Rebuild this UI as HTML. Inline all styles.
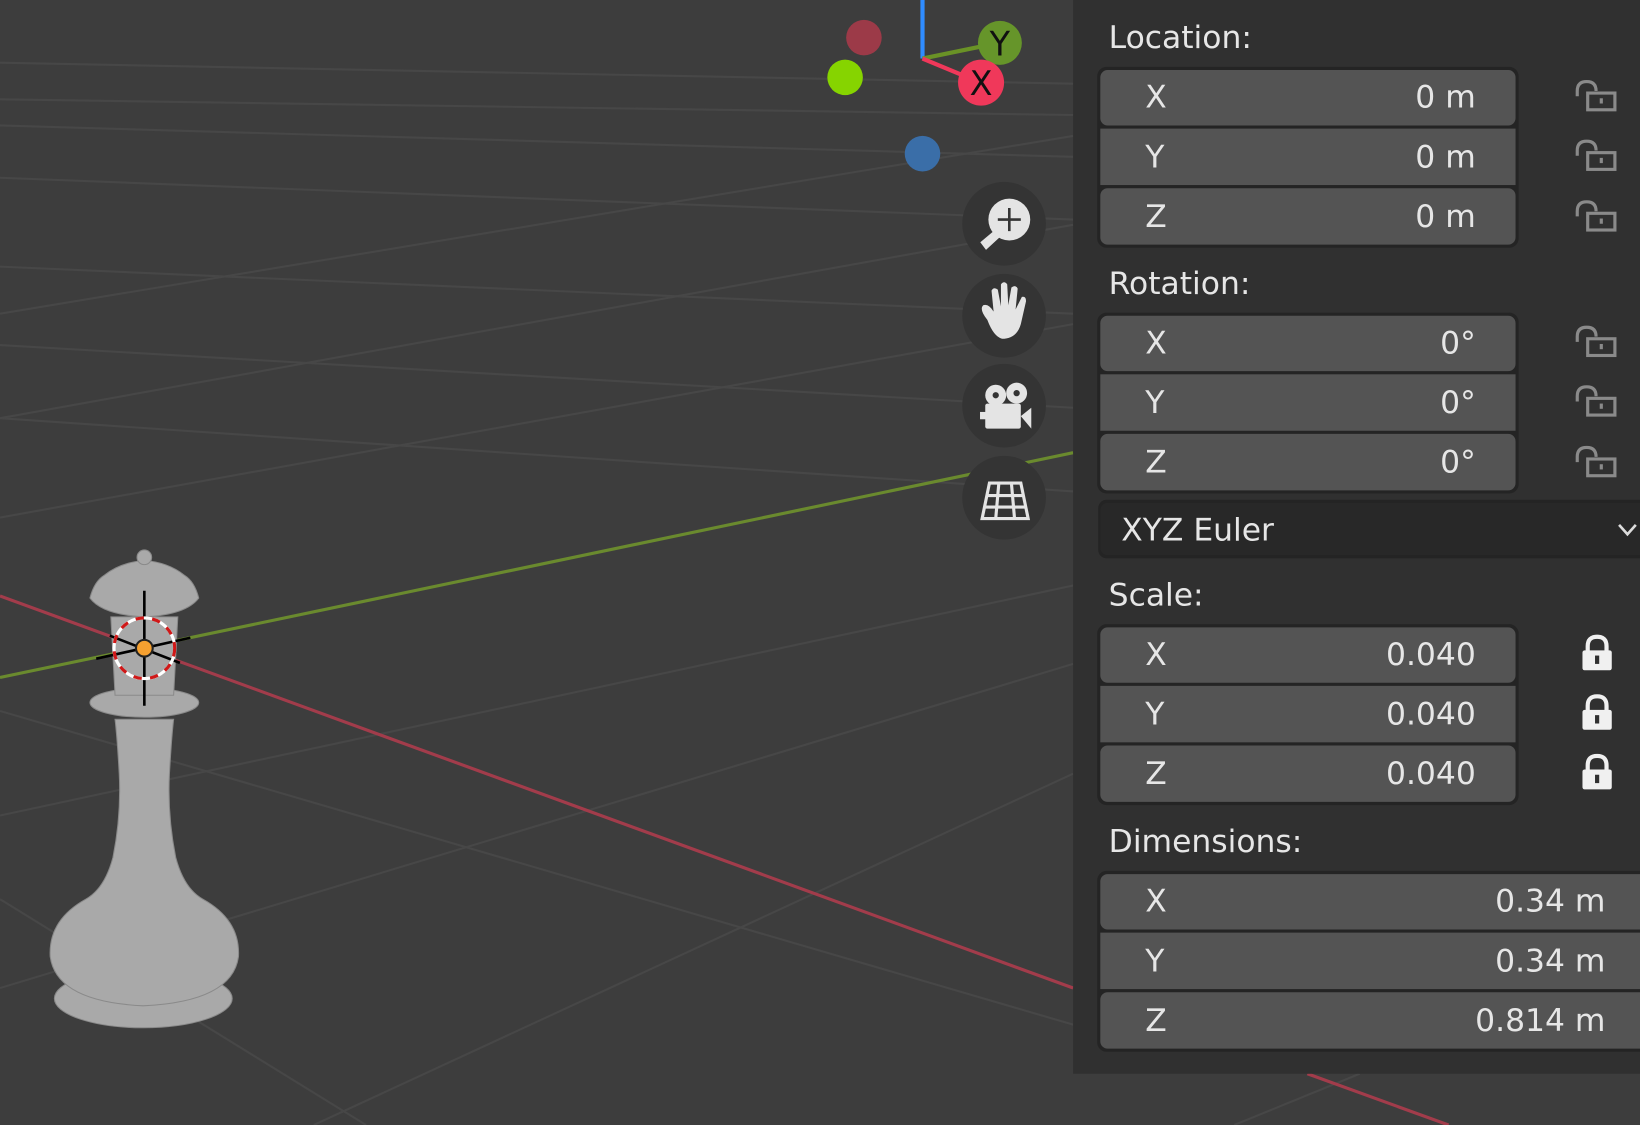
<!DOCTYPE html>
<html><head><style>html,body{margin:0;padding:0;background:#3d3d3d;overflow:hidden}svg{display:block}</style></head>
<body>
<svg width="1640" height="1125" viewBox="0 0 1568 1076" preserveAspectRatio="none" xmlns="http://www.w3.org/2000/svg" font-family="DejaVu Sans, Liberation Sans, sans-serif">
<rect width="1568" height="1076" fill="#3d3d3d"/>
<g stroke="#474747" stroke-width="2" fill="none">
<path d="M0 120 L1026 150"/><path d="M0 170 L1026 210"/><path d="M0 255 L1026 300"/><path d="M0 330 L1026 390"/>
<path d="M0 400 L1026 470"/><path d="M0 60 L1026 80"/><path d="M0 95 L1026 110"/>
<path d="M0 300 L1026 130"/><path d="M0 400 L1026 215"/><path d="M0 495 L1026 310"/><path d="M0 780 L1026 560"/><path d="M0 945 L1026 635"/>
<path d="M300 1076 L1026 740"/><path d="M0 680 L1026 980"/><path d="M0 860 L350 1076"/><path d="M1180 1076 L1300 1027"/>
</g>
<path d="M0 570 L1026 945" stroke="#a23c4b" stroke-width="3"/>
<path d="M1250 1027 L1385 1076" stroke="#a23c4b" stroke-width="3"/>
<path d="M0 648 L1026 433" stroke="#6a8a2e" stroke-width="3"/>
<!-- queen -->
<g fill="#a9a9a9" stroke="#8a8a8a" stroke-width="1">
<ellipse cx="137" cy="955" rx="85" ry="28"/>
<path d="M48 915 Q46 880 82 860 Q100 850 108 820 Q116 780 114 740 Q112 705 110 688 L166 688 Q164 705 162 740 Q160 780 168 820 Q176 850 194 860 Q230 880 228 915 Q222 958 137 962 Q54 958 48 915Z"/>
<ellipse cx="138" cy="672" rx="52" ry="14"/>
<path d="M106 590 L170 590 L166 665 L110 665Z"/>
<path d="M86 572 Q90 556 100 550 Q115 538 138 536 Q161 538 176 550 Q186 556 190 572 Q178 588 138 590 Q98 588 86 572Z"/>
<circle cx="138" cy="533" r="7"/>
</g>
<g stroke="#000" stroke-width="2.5"><path d="M138 565 V675"/><path d="M105 608 L172 634"/><path d="M92 630 L182 610"/></g>
<circle cx="138" cy="620" r="29" fill="none" stroke="#fff" stroke-width="3"/>
<circle cx="138" cy="620" r="29" fill="none" stroke="#d01818" stroke-width="3" stroke-dasharray="8 8"/>
<circle cx="138" cy="620" r="8" fill="#f5a030" stroke="#222" stroke-width="2"/>
<!-- gizmo -->
<circle cx="826" cy="36" r="17" fill="#9c3a48"/>
<circle cx="808" cy="74" r="17" fill="#86d400"/>
<circle cx="882" cy="147" r="17" fill="#3a6ea8"/>
<path d="M882 0 V56" stroke="#2f8cff" stroke-width="4"/>
<path d="M882 56 L950 42" stroke="#6a9226" stroke-width="4"/>
<path d="M882 56 L935 78" stroke="#f0385a" stroke-width="4"/>
<circle cx="956" cy="41" r="21" fill="#66952a"/>
<text x="956" y="53" font-size="32" text-anchor="middle" fill="#111">Y</text>
<circle cx="938" cy="79" r="22" fill="#f0385a"/>
<text x="938" y="91" font-size="32" text-anchor="middle" fill="#111">X</text>
<!-- nav buttons -->
<g fill="#343434"><circle cx="960" cy="214" r="40"/><circle cx="960" cy="302" r="40"/><circle cx="960" cy="388" r="40"/><circle cx="960" cy="476" r="40"/></g>
<g fill="#e4e4e4">
<circle cx="965" cy="210" r="20"/><path d="M940 232 L952 222 L955 225 L943 236Z" stroke="#e4e4e4" stroke-width="4" stroke-linecap="round"/>
<path d="M965 199 V221 M954 210 H976" stroke="#343434" stroke-width="2.5"/>
<path d="M944 306 Q936 296 940 292 Q945 290 950 298 L948 278 Q950 274 954 277 L957 293 L957 272 Q960 268 963 272 L964 292 L967 275 Q971 272 973 276 L971 296 L977 284 Q981 283 981 288 L976 310 Q972 324 958 324 Q950 322 944 306Z"/>
<circle cx="952" cy="378" r="10"/><circle cx="972" cy="376" r="10"/>
<rect x="942" y="386" width="34" height="24" rx="2"/><path d="M976 398 L986 390 V410Z"/><rect x="937" y="394" width="8" height="7"/>
</g>
<g fill="#343434"><circle cx="952" cy="378" r="3"/><circle cx="972" cy="376" r="3"/></g>
<g stroke="#e4e4e4" stroke-width="3" fill="none"><path d="M946 462 H976 L983 496 H939Z M944 474 H979 M941 485 H981 M955 462 L952 496 M967 462 L970 496"/></g>
<!-- panel -->
<rect x="1026" y="0" width="542" height="1027" fill="#303030"/>
<g font-size="30" fill="#e6e6e6">
<text x="1060" y="46">Location:</text>
<text x="1060" y="281">Rotation:</text>
<text x="1060" y="579">Scale:</text>
<text x="1060" y="815">Dimensions:</text>
</g>
<g fill="#242424">
<rect x="1049" y="64" width="403" height="173" rx="9"/>
<rect x="1049" y="299" width="403" height="173" rx="9"/>
<rect x="1049" y="597" width="403" height="173" rx="9"/>
<rect x="1049" y="833" width="540" height="173" rx="9"/>
<rect x="1050" y="478" width="540" height="56" rx="8"/>
</g>
<rect x="1052" y="481" width="540" height="50" rx="7" fill="#282828"/>
<g fill="#545454">
<rect x="1052" y="67" width="397" height="53" rx="7"/><rect x="1052" y="123" width="397" height="54"/><rect x="1052" y="180" width="397" height="54" rx="7"/>
<rect x="1052" y="302" width="397" height="53" rx="7"/><rect x="1052" y="358" width="397" height="54"/><rect x="1052" y="415" width="397" height="54" rx="7"/>
<rect x="1052" y="600" width="397" height="53" rx="7"/><rect x="1052" y="656" width="397" height="54"/><rect x="1052" y="713" width="397" height="54" rx="7"/>
<rect x="1052" y="836" width="540" height="53" rx="7"/><rect x="1052" y="892" width="540" height="54"/><rect x="1052" y="949" width="540" height="54" rx="7"/>
</g>
<g font-size="30" fill="#e6e6e6">
<text x="1095" y="103">X</text><text x="1095" y="160">Y</text><text x="1095" y="217">Z</text>
<text x="1095" y="338">X</text><text x="1095" y="395">Y</text><text x="1095" y="452">Z</text>
<text x="1095" y="636">X</text><text x="1095" y="693">Y</text><text x="1095" y="750">Z</text>
<text x="1095" y="872">X</text><text x="1095" y="929">Y</text><text x="1095" y="986">Z</text>
<text x="1072" y="517">XYZ Euler</text>
</g>
<g font-size="30" fill="#e6e6e6" text-anchor="end">
<text x="1411" y="103">0 m</text><text x="1411" y="160">0 m</text><text x="1411" y="217">0 m</text>
<text x="1411" y="338">0°</text><text x="1411" y="395">0°</text><text x="1411" y="452">0°</text>
<text x="1411" y="636">0.040</text><text x="1411" y="693">0.040</text><text x="1411" y="750">0.040</text>
<text x="1535" y="872">0.34 m</text><text x="1535" y="929">0.34 m</text><text x="1535" y="986">0.814 m</text>
</g>
<path d="M1548 502 L1556 511 L1564 502" stroke="#ddd" stroke-width="2.5" fill="none"/>
<g stroke="#8a8a8a" stroke-width="3" fill="none">
<g id="ul"><path d="M1508 92 V87 Q1508 78 1517 78 Q1526 78 1526 87"/><rect x="1518" y="89" width="26" height="16"/><path d="M1531 94 V99"/></g>
<use href="#ul" y="57"/><use href="#ul" y="115"/>
<use href="#ul" y="235"/><use href="#ul" y="292"/><use href="#ul" y="350"/>
</g>
<g fill="#f0f0f0">
<g id="lk"><path d="M1518 624 V618 Q1518 609 1527 609 Q1536 609 1536 618 V624" stroke="#f0f0f0" stroke-width="4" fill="none"/><rect x="1513" y="622" width="28" height="19" rx="2"/><rect x="1525" y="627" width="4" height="8" fill="#303030"/></g>
<use href="#lk" y="57"/><use href="#lk" y="114"/>
</g>
</svg>
</body></html>
